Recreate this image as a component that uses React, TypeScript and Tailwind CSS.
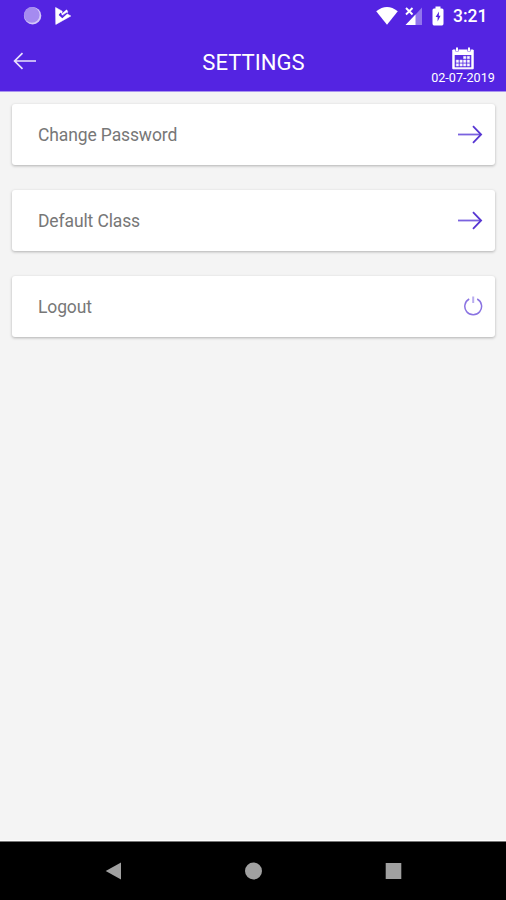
import type { ReactNode } from "react";

function StatusBar() {
  return (
    <div className="flex h-8 shrink-0 items-center justify-between pl-[23px] pr-[19px]">
      <div className="-mt-px flex items-center gap-3">
        <svg width="19" height="20" viewBox="0 0 19 20">
          <circle cx="9.6" cy="9.7" r="8.7" fill="#d3c7f9" />
          <circle cx="8.8" cy="8.9" r="7.8" fill="#a58bf0" />
        </svg>
        <svg width="18" height="20" viewBox="0 0 18 20">
          <path
            d="M1.6 1.5L8.2 5.2L7.8 7.4L6.4 6.4L5 8.2L8.2 11L13.6 5.6L12.8 7.8L16.8 10L1.8 18.4Z"
            fill="#fff"
            stroke="#fff"
            strokeWidth=".6"
            strokeLinejoin="round"
          />
          <path d="M5.2 8.4L8.3 11.2L13 7" fill="none" stroke="#5424e2" strokeWidth="1.5" />
          <path d="M7.4 8L12.6 3.6L14 5.2L8.2 9.6Z" fill="#fff" />
        </svg>
      </div>
      <div className="-mt-px flex items-center">
        <svg width="22" height="20" viewBox="0 0 22 20">
          <path d="M.2 5.3Q11-3.2 21.8 5.3L11 18.8Z" fill="#fff" />
        </svg>
        <svg className="ml-[7px]" width="18" height="20" viewBox="0 0 18 20">
          <path d="M17 1.5V19H1Z" fill="#9275ed" />
          <path d="M10.5 8.5V19H.5Z" fill="#fff" />
          <path d="M1 2L7.5 8.5M7.5 2L1 8.5" stroke="#fff" strokeWidth="1.9" />
        </svg>
        <svg className="ml-[9px]" width="12" height="20" viewBox="0 0 12 20">
          <path d="M3.5.5H8.5V2.5H10Q11.5 2.5 11.5 4V17.5Q11.5 19.4 10 19.4H2Q.5 19.4 .5 17.5V4Q.5 2.5 2 2.5H3.5Z" fill="#fff" />
          <path d="M7 5.5L3.6 11H5.6V15.5L8.6 9.8H6.8Z" fill="#5424e2" />
        </svg>
        <span className="ml-[9px] w-[34px] whitespace-nowrap pt-px text-[17.5px] font-medium leading-5">3:21</span>
      </div>
    </div>
  );
}

function CalendarIcon() {
  return (
    <svg width="22" height="23" viewBox="0 0 22 23">
      <path d="M.8 3H21.2V21.8H.8Z" fill="#fff" stroke="#fff" strokeWidth="1" strokeLinejoin="round" />
      <path d="M2.7 8H19.3V20.3H2.7Z" fill="#5b2ee3" />
      <path d="M5 .5V4.5M17 .5V4.5" stroke="#5424e2" strokeWidth="3" />
      <path d="M5 .5V4.2M17 .5V4.2" stroke="#fff" strokeWidth="2" />
      <path
        d="M11.5 9.3h2.4v2.4h-2.4zM15.2 9.3h2.4v2.4h-2.4zM4.2 13h2.4v2.4h-2.4zM7.9 13h2.4v2.4h-2.4zM11.5 13h2.4v2.4h-2.4zM15.2 13h2.4v2.4h-2.4zM4.2 16.7h2.4v2.4h-2.4zM7.9 16.7h2.4v2.4h-2.4zM11.5 16.7h2.4v2.4h-2.4zM15.2 16.7h2.4v2.4h-2.4z"
        fill="#fff"
        stroke="#ddd4fa"
        strokeWidth=".5"
      />
    </svg>
  );
}

function ArrowRight() {
  return (
    <svg width="26" height="20" viewBox="0 0 26 20" fill="none" stroke="#5736d2" strokeWidth="1.8">
      <path d="M1 9.5H24" stroke="#7a62df" strokeWidth="1.8" />
      <path d="M16 1.2L24.1 9.5L16 17.8" />
    </svg>
  );
}

function PowerIcon() {
  return (
    <svg width="20" height="22" viewBox="0 0 20 22" fill="none" stroke="#8a73e2" strokeWidth="1.5">
      <path d="M6.2 3A8.4 8.4 0 1 0 14.2 3" />
      <path d="M10.2 .5V7" stroke="#b9adef" strokeWidth="2" />
    </svg>
  );
}

function SettingsRow({ label, icon }: { label: string; icon: ReactNode }) {
  return (
    <button className="flex h-[61px] w-full items-center justify-between rounded-[3px] bg-white pl-[26px] pr-3 text-left shadow-[0_1px_3px_rgba(0,0,0,0.28)]">
      <span className="text-[17.5px] leading-6 tracking-[-0.12px] text-[#777]">{label}</span>
      {icon}
    </button>
  );
}

export default function App() {
  return (
    <div className="flex h-[900px] w-[506px] flex-col overflow-hidden bg-[#f4f4f4] font-[Roboto,sans-serif]">
      <div className="flex h-[91px] shrink-0 flex-col bg-[#5424e2] text-white shadow-[0_1px_0_#a994ef]">
        <StatusBar />
        <header className="grid h-[59px] grid-cols-[1fr_auto_1fr] items-start">
          <button className="ml-[13px] mt-[20px] w-6" aria-label="Back">
            <svg width="24" height="18" viewBox="0 0 24 18" fill="none" stroke="#e9e2fd" strokeWidth="1.7">
              <path d="M1.5 9H23M9.5 1.2L1.6 9L9.5 16.8" />
            </svg>
          </button>
          <h1 className="mt-[16px] pl-px text-[22.1px] leading-7">SETTINGS</h1>
          <button className="mr-[11px] mt-[15px] flex w-[64px] flex-col items-center justify-self-end">
            <CalendarIcon />
            <span className="mt-[1px] whitespace-nowrap text-[12.6px] leading-[14px]">02-07-2019</span>
          </button>
        </header>
      </div>
      <main className="flex flex-1 flex-col gap-[25px] border-b border-white pl-[12px] pr-[11px] pt-[13px]">
        <SettingsRow label="Change Password" icon={<ArrowRight />} />
        <SettingsRow label="Default Class" icon={<ArrowRight />} />
        <SettingsRow label="Logout" icon={<PowerIcon />} />
      </main>
      <nav className="flex h-[59px] shrink-0 items-center justify-between border-t border-[#777] bg-black pl-[105px] pr-[104px]">
        <svg width="17" height="18" viewBox="0 0 17 18"><path d="M.7 9L16 .5V17.5Z" fill="#a0a0a0" /></svg>
        <svg width="18" height="18" viewBox="0 0 18 18"><circle cx="8.5" cy="9" r="8.5" fill="#a0a0a0" /></svg>
        <svg width="17" height="18" viewBox="0 0 17 18"><path d="M.7 1H16.3V17H.7Z" fill="#a0a0a0" /></svg>
      </nav>
    </div>
  );
}
